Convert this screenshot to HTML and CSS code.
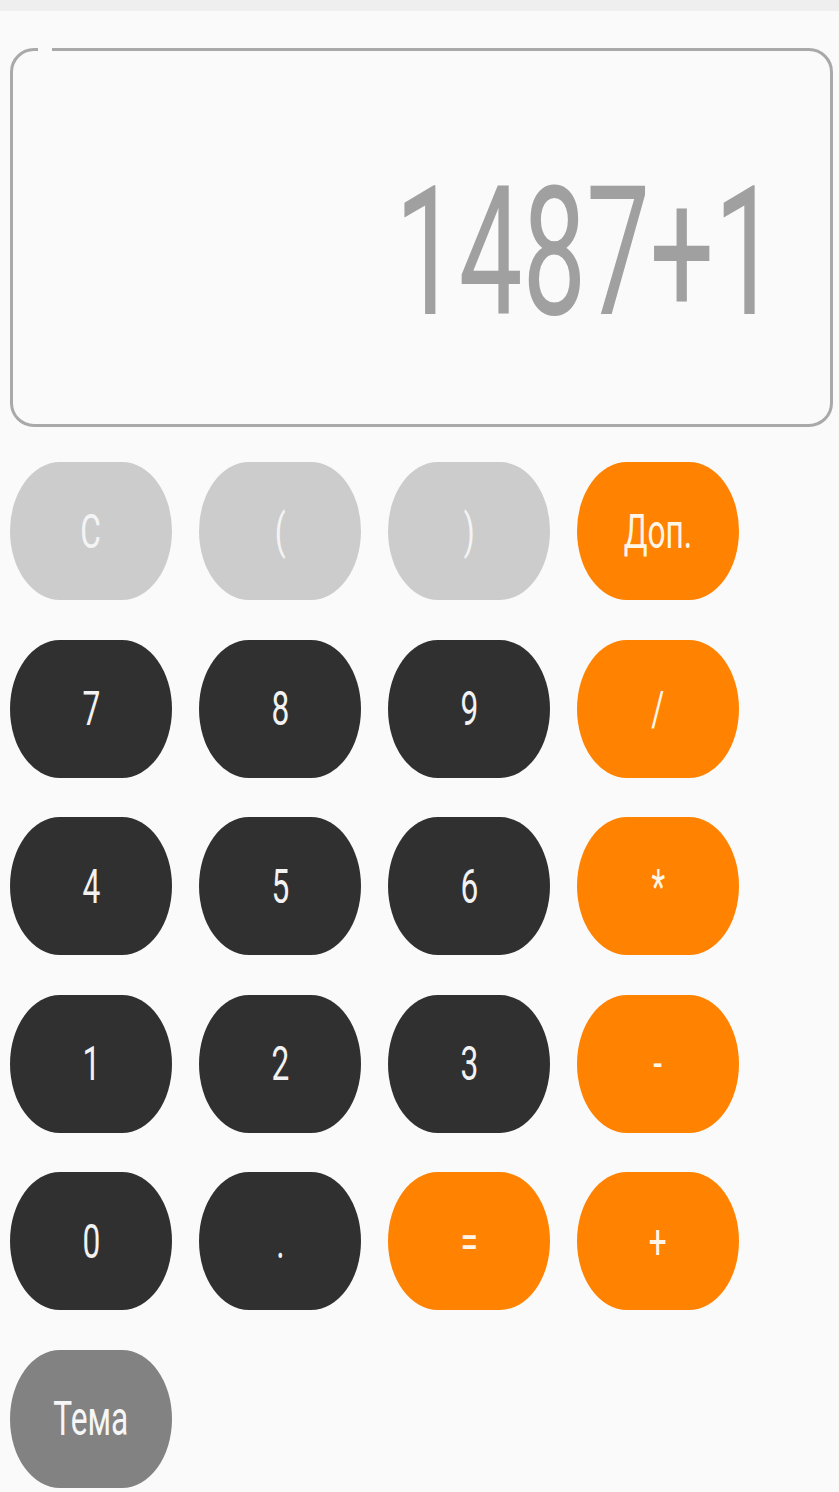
FILE: index.html
```html
<!DOCTYPE html>
<html lang="ru">
<head>
<meta charset="utf-8">
<title>Калькулятор</title>
<link rel="stylesheet" href="styles.css">
</head>
<body>
<div class="status"></div>
<main class="app">
  <div class="display">
    <span class="notch"></span>
    <span class="expr">1487+1</span>
  </div>
  <div class="keys">
    <button class="key light"><span>C</span></button>
    <button class="key light"><span>(</span></button>
    <button class="key light"><span>)</span></button>
    <button class="key accent"><span>Доп.</span></button>

    <button class="key dark"><span>7</span></button>
    <button class="key dark"><span>8</span></button>
    <button class="key dark"><span>9</span></button>
    <button class="key accent"><span>/</span></button>

    <button class="key dark"><span>4</span></button>
    <button class="key dark"><span>5</span></button>
    <button class="key dark"><span>6</span></button>
    <button class="key accent"><span>*</span></button>

    <button class="key dark"><span>1</span></button>
    <button class="key dark"><span>2</span></button>
    <button class="key dark"><span>3</span></button>
    <button class="key accent"><span>-</span></button>

    <button class="key dark"><span>0</span></button>
    <button class="key dark"><span>.</span></button>
    <button class="key accent"><span>=</span></button>
    <button class="key accent"><span>+</span></button>

    <button class="key theme"><span>Тема</span></button>
  </div>
</main>
</body>
</html>
```

FILE: styles.css
```css
html, body {
  margin: 0;
  padding: 0;
  background: #fafafa;
  font-family: Roboto, "Noto Sans", sans-serif;
}

.status {
  height: 11px;
  background: #efefef;
}

.app {
  padding: 37px 6px 0 10px;
}

.display {
  position: relative;
  box-sizing: border-box;
  height: 379px;
  border: 3px solid #a9a9a9;
  border-radius: 24px;
  display: flex;
  align-items: center;
  justify-content: flex-end;
  padding-right: 52px;
  padding-top: 30px;
}

.notch {
  position: absolute;
  top: -4px;
  left: 25px;
  width: 14px;
  height: 6px;
  background: #fafafa;
}

.expr {
  display: inline-block;
  font-size: 180px;
  line-height: 1;
  color: #a0a0a0;
  transform: scaleX(0.63);
  transform-origin: right center;
  white-space: nowrap;
}

.keys {
  display: grid;
  grid-template-columns: repeat(4, 162px);
  grid-auto-rows: 138px;
  column-gap: 27px;
  row-gap: 39.5px;
  margin-top: 35px;
}

.key {
  border: none;
  padding: 0;
  margin: 0;
  border-radius: 50px / 50%;
  font-family: Roboto, "Noto Sans", sans-serif;
  font-size: 48px;
  color: #ffffff;
  display: flex;
  align-items: center;
  justify-content: center;
}

.key span {
  display: inline-block;
  transform: scaleX(0.66);
  white-space: nowrap;
}

.light {
  background: #cccccc;
  color: #f4f4f4;
}

.dark {
  background: #303030;
  color: #f2f2f2;
}

.accent {
  background: #ff8200;
  color: #fff6e8;
}

.theme {
  background: #828282;
  color: #f6f6f6;
}
```
